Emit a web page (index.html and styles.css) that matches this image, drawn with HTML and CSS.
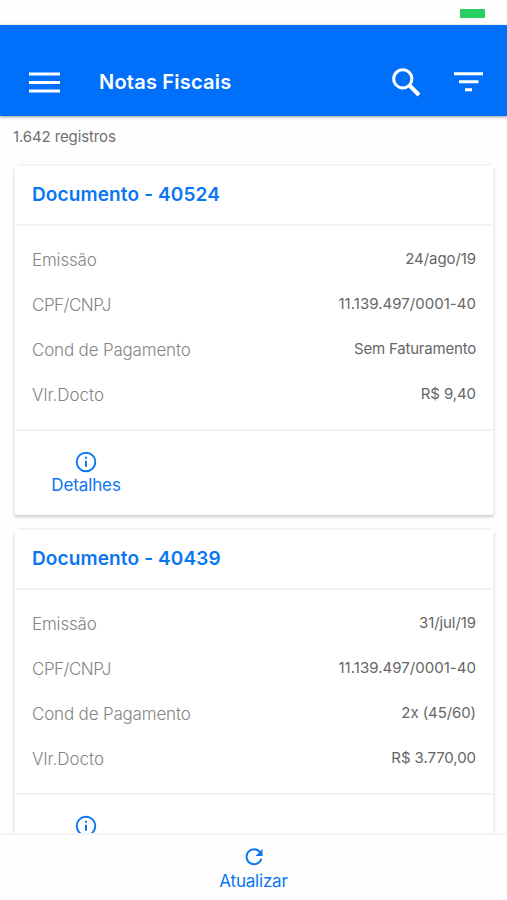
FILE: index.html
```html
<!DOCTYPE html>
<html lang="pt-BR">
<head>
<meta charset="utf-8">
<title>Notas Fiscais</title>
<link rel="stylesheet" href="styles.css">
</head>
<body>
<div class="app">
  <div class="status"><span class="battery"></span></div>
  <header class="toolbar">
    <svg class="menu" viewBox="0 0 32 22" width="32" height="22"><path d="M0 2h31M0 10.500h31M0 19h31" stroke="#fff" stroke-width="3"/></svg>
    <h1>Notas Fiscais</h1>
    <svg class="search" viewBox="0 0 29 29" width="29" height="29" fill="none" stroke="#fff"><circle cx="10.800" cy="10.800" r="9.100" stroke-width="3"/><path d="M17.500 17.500L27 27" stroke-width="4"/></svg>
    <svg class="filter" viewBox="0 0 29 20" width="29" height="20"><path d="M0 1.700h29M5 9.800h19.500M11 17.800h7" stroke="#fff" stroke-width="3"/></svg>
  </header>
  <main>
    <p class="count">1.642 registros</p>
    <article class="card">
      <h2>Documento - 40524</h2>
      <dl>
        <div><dt>Emissão</dt><dd>24/ago/19</dd></div>
        <div><dt class="caps">CPF/CNPJ</dt><dd class="number">11.139.497/0001-40</dd></div>
        <div><dt>Cond de Pagamento</dt><dd class="terms">Sem Faturamento</dd></div>
        <div><dt class="total">Vlr.Docto</dt><dd>R$ 9,40</dd></div>
      </dl>
      <footer><a class="details">
        <svg viewBox="0 0 22 22" width="22" height="22"><circle cx="11" cy="11" r="9.300" fill="none" stroke="#0a76f2" stroke-width="1.900"/><path d="M11 5.800v2M11 9.800v6" stroke="#0a76f2" stroke-width="2"/></svg>
        <span>Detalhes</span></a></footer>
    </article>
    <article class="card">
      <h2>Documento - 40439</h2>
      <dl>
        <div><dt>Emissão</dt><dd>31/jul/19</dd></div>
        <div><dt class="caps">CPF/CNPJ</dt><dd class="number">11.139.497/0001-40</dd></div>
        <div><dt>Cond de Pagamento</dt><dd>2x (45/60)</dd></div>
        <div><dt class="total">Vlr.Docto</dt><dd>R$ 3.770,00</dd></div>
      </dl>
      <footer><a class="details">
        <svg viewBox="0 0 22 22" width="22" height="22"><circle cx="11" cy="11" r="9.300" fill="none" stroke="#0a76f2" stroke-width="1.900"/><path d="M11 5.800v2M11 9.800v6" stroke="#0a76f2" stroke-width="2"/></svg>
        </a></footer>
    </article>
  </main>
  <nav class="bottom">
    <svg viewBox="0 0 18 18" width="18" height="18"><path d="M15 4.200A7.500 7.500 0 1 0 16.300 10.800" fill="none" stroke="#0a76f2" stroke-width="2"/><path d="M17.500 1v7h-7z" fill="#0a76f2"/></svg>
    <span>Atualizar</span>
  </nav>
</div>
</body>
</html>
```
FILE: styles.css
```css
* { box-sizing: border-box; margin: 0; padding: 0; }
body { background: #fefefe; font-family: Inter, "Liberation Sans", sans-serif; }
.app { height: 900px; display: flex; flex-direction: column; overflow: hidden; }
.status { height: 25px; flex: none; display: flex; justify-content: flex-end; padding: 9px 22px 0 0; }
.battery { width: 25px; height: 8.500px; border-radius: 1px; background: #29cf62; }
.toolbar { height: 91px; flex: none; display: flex; align-items: flex-start; padding: 43px 24px 0 29px; background: #0070fa; box-shadow: 0 1px 3px rgba(0,0,0,.4); }
.menu { margin-top: 3.500px; }
h1 { flex: 1; margin-left: 38px; font-size: 20px; line-height: 28px; font-weight: 600; letter-spacing: .22px; color: #fff; white-space: nowrap; }
.search { margin-right: 33px; }
.filter { margin-top: 4px; }
main { flex: 1; min-height: 0; overflow: hidden; padding: 0 12px 0 13px; }
.count { height: 47.500px; padding-top: 11px; font-size: 15px; line-height: 20px; letter-spacing: -.12px; color: #707070; }
.card {
  height: 351.500px;
  margin-bottom: 12.500px;
  padding: 1px 3px 0;
  border-radius: 4px;
  background:
    linear-gradient(#f0f0f0, #f0f0f0) 5px 0 / calc(100% - 9px) 1.500px no-repeat,
    linear-gradient(#f0f0f0, #f0f0f0) 0 5px / 2px 100% no-repeat,
    linear-gradient(#f0f0f0, #f0f0f0) 100% 5px / 2px 100% no-repeat,
    #fff;
  box-shadow: 0 3px 3px -1px rgba(0,0,0,.2);
}
h2 { height: 61px; padding: 16px 16px; border-bottom: 2px solid #f2f2f2; font-size: 19px; line-height: 28px; font-weight: 600; letter-spacing: .13px; color: #0a76f2; }
dl { height: 205.500px; padding: 11.500px 16px 0; border-bottom: 2px solid #f2f2f2; }
dl div { display: flex; justify-content: space-between; height: 45.200px; align-items: center; }
dt { font-size: 17px; font-weight: 300; letter-spacing: -.18px; color: #858585; }
dt.caps { letter-spacing: -.48px; }
dt.total { letter-spacing: 0; }
dd { font-size: 15px; letter-spacing: -.08px; color: #666; padding-bottom: 3px; }
dd.number { letter-spacing: .03px; }
dd.terms { letter-spacing: -.2px; }
footer { padding: 19.500px 0 0 35px; }
.details { display: inline-flex; flex-direction: column; align-items: center; width: 70px; font-size: 17px; line-height: 23px; letter-spacing: -.12px; color: #0a76f2; }
.details span { margin-top: 1px; }
.bottom { height: 67px; flex: none; border-top: 2px solid #f4f4f4; display: flex; flex-direction: column; align-items: center; padding-top: 12.500px; font-size: 17px; line-height: 22px; letter-spacing: -.2px; color: #0a76f2; }
.bottom span { margin-top: 4.500px; }
```
